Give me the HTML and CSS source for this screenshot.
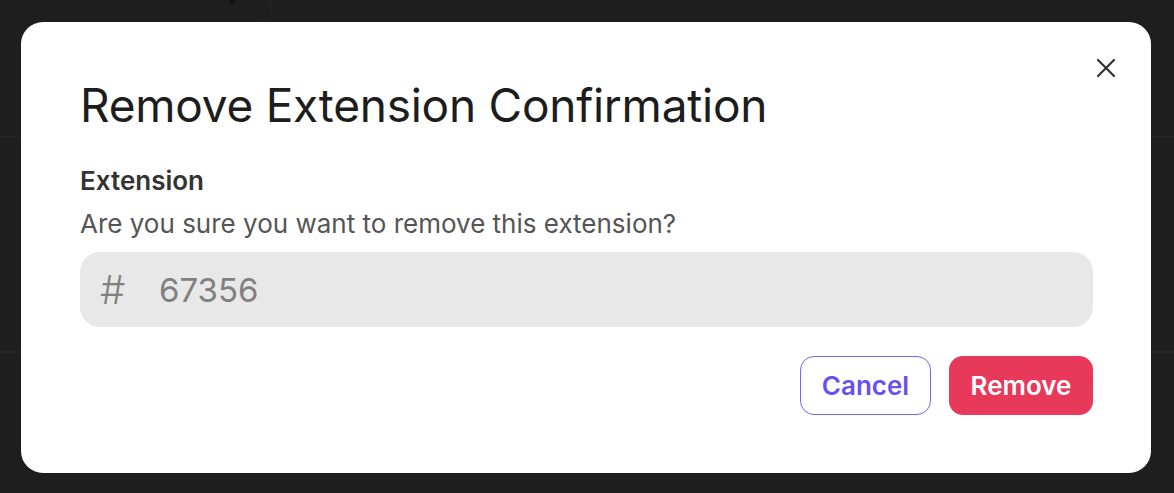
FILE: index.html
```html
<!DOCTYPE html>
<html lang="en">
<head>
    <meta charset="UTF-8">
    <meta name="viewport" content="width=device-width, initial-scale=1.0">
    <title>Remove Extension</title>
    <link rel="stylesheet" href="styles.css">
</head>
<body>
    <!-- Page behind the dialog -->
    <div class="app">
        <div class="topbar">
            <div class="tab"><span class="tab-caret"></span></div>
        </div>
        <div class="row row-tall"></div>
        <div class="row row-big"></div>
        <div class="row"></div>
    </div>

    <!-- Dialog -->
    <div class="overlay">
        <div class="modal">
            <button class="close" aria-label="Close">
                <svg width="20" height="20" viewBox="0 0 20 20" fill="none" stroke="#333" stroke-width="2.2" stroke-linecap="round">
                    <path d="M2 2 L18 18 M18 2 L2 18"/>
                </svg>
            </button>
            <h1 class="title">Remove Extension Confirmation</h1>
            <div class="label">Extension</div>
            <p class="desc">Are you sure you want to remove this extension?</p>
            <div class="field">
                <span class="field-icon">#</span>
                <span class="field-value">67356</span>
            </div>
            <div class="actions">
                <button class="btn btn-cancel">Cancel</button>
                <button class="btn btn-remove">Remove</button>
            </div>
        </div>
    </div>
</body>
</html>
```

FILE: styles.css
```css
html, body {
    margin: 0;
    padding: 0;
    height: 100%;
}
body {
    font-family: Inter, "Noto Sans", sans-serif;
    background-color: #1e1e1e;
    overflow: hidden;
}
.app {
    height: 100%;
}
.topbar {
    height: 22px;
    display: flex;
}
.tab {
    width: 270px;
    height: 22px;
    border-right: 1px solid #262626;
    border-bottom-right-radius: 10px;
    position: relative;
}
.tab-caret {
    position: absolute;
    left: 228px;
    top: -6px;
    width: 6px;
    height: 6px;
    border-right: 2px solid #111;
    border-bottom: 2px solid #111;
    transform: rotate(45deg);
}
.row {
    border-bottom: 1px solid #262626;
}
.row-tall {
    height: 114px;
}
.row-big {
    height: 214px;
}
.overlay {
    position: fixed;
    inset: 0;
    display: flex;
    align-items: center;
    justify-content: center;
    padding-right: 2px;
    padding-top: 2px;
}
.modal {
    position: relative;
    box-sizing: border-box;
    width: 1130px;
    height: 451px;
    background-color: #fff;
    border-radius: 22px;
    padding: 55px 58px 0 59px;
}
.close {
    position: absolute;
    top: 36px;
    right: 35px;
    width: 20px;
    height: 20px;
    padding: 0;
    border: none;
    background: none;
    cursor: pointer;
}
.title {
    margin: 0;
    font-size: 46px;
    font-weight: 400;
    line-height: 56px;
    color: #1d1d1d;
    letter-spacing: -0.25px;
}
.label {
    margin-top: 32px;
    font-size: 26px;
    font-weight: 600;
    line-height: 32px;
    color: #333;
}
.desc {
    margin: 11px 0 0;
    font-size: 26px;
    line-height: 32px;
    color: #555;
}
.field {
    margin-top: 12px;
    height: 75px;
    border-radius: 20px;
    background-color: #e8e8e8;
    display: flex;
    align-items: center;
    padding: 0 20px;
    font-size: 33px;
    color: #808080;
}
.field-icon {
    width: 59px;
    font-size: 40px;
    font-weight: 300;
}
.actions {
    margin-top: 29px;
    display: flex;
    justify-content: flex-end;
    gap: 18px;
}
.btn {
    height: 59px;
    border-radius: 14px;
    font-family: Inter, "Noto Sans", sans-serif;
    font-size: 26px;
    font-weight: 600;
    padding: 0 10px;
    cursor: pointer;
}
.btn-cancel {
    width: 131px;
    background-color: #fff;
    border: 1px solid #7b61ff;
    color: #6a4ff2;
}
.btn-remove {
    width: 144px;
    background-color: #e8395a;
    border: none;
    color: #fff;
}
```
